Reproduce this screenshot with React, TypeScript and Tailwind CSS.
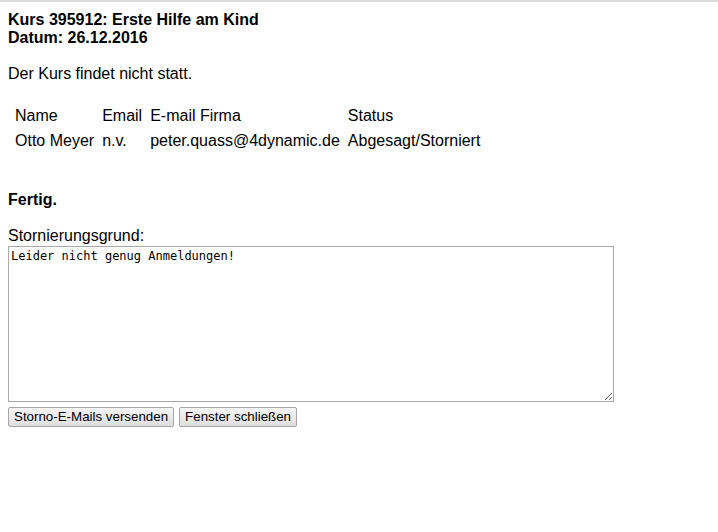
export default function App() {
	const rows = [
		["Name", "Email", "E-mail Firma", "Status"],
		["Otto Meyer", "n.v.", "peter.quass@4dynamic.de", "Abgesagt/Storniert"],
	];

	return (
		<div className="min-h-[532px] bg-white border-t-2 border-[#dadada] px-2 pt-[9px] font-['Liberation_Sans',Arial,sans-serif] text-[16px] leading-[18px] text-black">
			<div className="font-bold">
				Kurs 395912: Erste Hilfe am Kind
				<br />
				Datum: 26.12.2016
			</div>
			<p className="mt-[18px]">Der Kurs findet nicht statt.</p>
			<table className="mt-[19px] ml-[2px] border-separate border-spacing-[2px]">
				<tbody>
					{rows.map((row, i) => (
						<tr key={i}>
							{row.map((cell, j) => (
								<td key={j} className="px-[3px] py-[2px] leading-[19px] text-left">
									{cell}
								</td>
							))}
						</tr>
					))}
				</tbody>
			</table>
			<p className="mt-[37px] font-bold">Fertig.</p>
			<p className="mt-[18px]">Stornierungsgrund:</p>
			<textarea
				className="mt-[1px] block w-[606px] h-[156px] border border-[#a9a9a9] px-[2px] py-[2px] font-['DejaVu_Sans_Mono',monospace] text-[12px] leading-[15px] outline-none"
				defaultValue="Leider nicht genug Anmeldungen!"
			/>
			<div className="mt-[5px] flex gap-[5px]">
				<button className="h-[20px] px-[5px] border border-[#a6a6a6] rounded-[2px] bg-gradient-to-b from-[#f6f6f6] to-[#dedede] text-[13.33px] leading-[16px] text-black">
					Storno-E-Mails versenden
				</button>
				<button className="h-[20px] px-[5px] border border-[#a6a6a6] rounded-[2px] bg-gradient-to-b from-[#f6f6f6] to-[#dedede] text-[13.33px] leading-[16px] text-black">
					Fenster schließen
				</button>
			</div>
		</div>
	);
}
